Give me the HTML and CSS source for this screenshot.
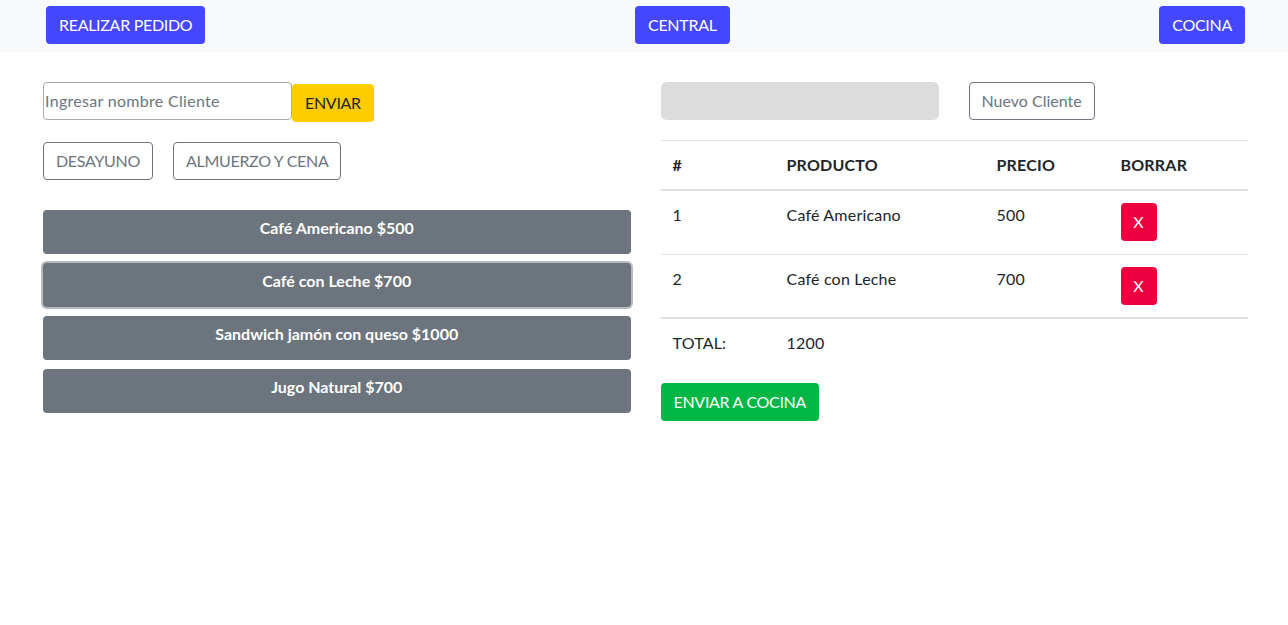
FILE: index.html
```html
<!DOCTYPE html>
<html lang="es">
<head>
<meta charset="utf-8">
<title>Pedidos</title>
<link rel="stylesheet" href="styles.css">
</head>
<body>
<nav class="navbar">
  <button class="btn btn-nav caps">REALIZAR PEDIDO</button>
  <button class="btn btn-nav caps">CENTRAL</button>
  <button class="btn btn-nav caps">COCINA</button>
</nav>
<main class="main">
  <section class="col">
    <div class="client-row">
      <input class="client-input" type="text" placeholder="Ingresar nombre Cliente">
      <button class="btn btn-yellow caps">ENVIAR</button>
    </div>
    <div class="menu-tabs">
      <button class="btn btn-outline caps">DESAYUNO</button>
      <button class="btn btn-outline caps">ALMUERZO Y CENA</button>
    </div>
    <div class="products">
      <button class="btn btn-product">Café Americano $500</button>
      <button class="btn btn-product focused">Café con Leche $700</button>
      <button class="btn btn-product">Sandwich jamón con queso $1000</button>
      <button class="btn btn-product">Jugo Natural $700</button>
    </div>
  </section>
  <section class="col">
    <div class="client-row right">
      <div class="client-name"></div>
      <button class="btn btn-outline">Nuevo Cliente</button>
    </div>
    <table class="order">
      <thead>
        <tr><th class="c1">#</th><th class="c2">PRODUCTO</th><th class="c3">PRECIO</th><th class="c4">BORRAR</th></tr>
      </thead>
      <tbody>
        <tr><td>1</td><td>Café Americano</td><td>500</td><td><button class="btn btn-red">X</button></td></tr>
        <tr><td>2</td><td>Café con Leche</td><td>700</td><td><button class="btn btn-red">X</button></td></tr>
      </tbody>
      <tfoot>
        <tr><td>TOTAL:</td><td>1200</td><td></td><td></td></tr>
      </tfoot>
    </table>
    <button class="btn btn-green caps">ENVIAR A COCINA</button>
  </section>
</main>
</body>
</html>
```
FILE: styles.css
```css
* { box-sizing: border-box; }
body {
  margin: 0;
  font-family: Lato, "Liberation Sans", sans-serif;
  font-size: 16px;
  line-height: 24px;
  color: #212529;
  background: #fff;
}
.btn {
  font-family: inherit;
  font-size: 16px;
  line-height: 24px;
  padding: 6px 12px;
  border: 1px solid transparent;
  border-radius: 4px;
  cursor: pointer;
  background: none;
}
.caps { letter-spacing: -0.3px; }
.navbar {
  display: flex;
  justify-content: space-between;
  align-items: center;
  background: #f8f9fa;
  height: 52px;
  padding: 0 43px 2px 46px;
}
.btn-nav {
  background: #4447ff;
  color: #fff;
}
.main {
  display: grid;
  grid-template-columns: 1fr 1fr;
  column-gap: 30px;
  padding: 30px 40px 0 43px;
}
.client-row {
  display: flex;
  align-items: flex-start;
  height: 40px;
}
.client-input {
  width: 249px;
  height: 38px;
  font-family: inherit;
  font-size: 16px;
  letter-spacing: 0.3px;
  padding: 0 1px 2px;
  border: 1px solid #a9a9ad;
  border-radius: 4px;
  color: #212529;
}
.client-input::placeholder { color: #6c757d; }
.btn-yellow {
  margin-top: 2px;
  background: #ffcc00;
  color: #212529;
}
.menu-tabs {
  display: flex;
  gap: 20px;
  margin-top: 20px;
}
.btn-outline {
  border-color: #6c757d;
  color: #6c757d;
}
.products {
  display: flex;
  flex-direction: column;
  gap: 9px;
  margin-top: 30px;
}
.btn-product {
  width: 100%;
  height: 44px;
  background: #6c757d;
  color: #fff;
  font-weight: 700;
  padding-top: 5px;
  padding-bottom: 13px;
}
.btn-product.focused {
  box-shadow: 0 0 0 2px #b7bbbf;
}
.client-row.right { gap: 30px; }
.client-name {
  width: 278px;
  height: 38px;
  background: #dcdcdc;
  border-radius: 6px;
}
.order {
  width: 100%;
  border-collapse: collapse;
  margin-top: 18px;
  margin-bottom: 16px;
  letter-spacing: 0.2px;
}
.order th, .order td {
  text-align: left;
  vertical-align: top;
  padding: 12px 12px;
  border-top: 1px solid #dee2e6;
}
.order thead th {
  font-weight: 700;
  border-bottom: 2px solid #dee2e6;
}
.order tfoot td {
  border-top: 2px solid #dee2e6;
}
.c1 { width: 114px; }
.c2 { width: 210px; }
.c3 { width: 124px; }
.btn-red {
  background: #ee0040;
  color: #fff;
  width: 36px;
  height: 38px;
  padding: 6px 0;
  display: block;
}
.order tbody td { padding-top: 12px; padding-bottom: 12.5px; }
.btn-green {
  background: #00b746;
  color: #fff;
}
```
